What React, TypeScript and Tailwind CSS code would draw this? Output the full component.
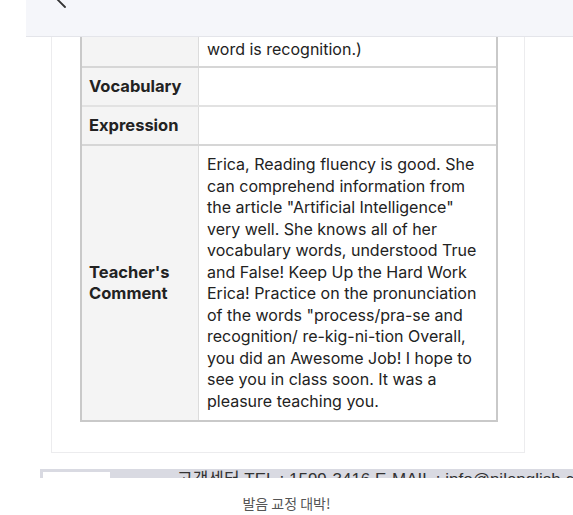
import React from "react";

const font = { fontFamily: 'Inter, "Liberation Sans", Arial, sans-serif' };

const lines = [
  "Erica, Reading fluency is good. She",
  "can comprehend information from",
  'the article "Artificial Intelligence"',
  "very well. She knows all of her",
  "vocabulary words, understood True",
  "and False! Keep Up the Hard Work",
  "Erica! Practice on the pronunciation",
  'of the words "process/pra-se and',
  "recognition/ re-kig-ni-tion Overall,",
  "you did an Awesome Job! I hope to",
  "see you in class soon. It was a",
  "pleasure teaching you.",
];

export default function App() {
  return (
    <div className="w-[573px] h-[515px] bg-white overflow-hidden flex flex-col" style={font}>
      <div className="ml-[26px] h-[37px] shrink-0 bg-[#f5f6fa] border-b border-[#e4e5ea] relative overflow-hidden">
        <svg className="absolute left-[27px] top-[-15px]" width="14" height="24" viewBox="0 0 14 24">
          <path d="M12 2 L2 12 L12 22" stroke="#333" strokeWidth="1.8" fill="none" strokeLinecap="round" />
        </svg>
      </div>
      <div className="ml-[51px] w-[474px] h-[416px] shrink-0 border-l border-r border-b border-[#ececee] pl-[28px]">
        <div className="w-[418px] border-l-2 border-r-2 border-b-2 border-[#c9c9c9] text-[#222] text-[16px]">
          <div className="flex h-[31px] border-b-2 border-[#d6d6d6]">
            <div className="w-[117px] bg-[#f4f4f4] border-r border-[#dcdcdc]" />
            <div className="flex-1 pl-[8px] pt-[2px] leading-[20px]">word is recognition.)</div>
          </div>
          <div className="flex h-[39px] border-b-2 border-[#e2e2e2]">
            <div className="w-[117px] bg-[#f4f4f4] border-r border-[#dcdcdc] flex items-center pl-[7px] font-bold text-[16.5px]">Vocabulary</div>
            <div className="flex-1" />
          </div>
          <div className="flex h-[39px] border-b-2 border-[#d6d6d6]">
            <div className="w-[117px] bg-[#f4f4f4] border-r border-[#dcdcdc] flex items-center pl-[7px] font-bold text-[16.5px]">Expression</div>
            <div className="flex-1" />
          </div>
          <div className="flex h-[274px]">
            <div className="w-[117px] bg-[#f4f4f4] border-r border-[#dcdcdc] flex items-center pl-[7px] font-bold text-[16.5px] leading-[21px]">
              Teacher's
              <br />
              Comment
            </div>
            <div className="flex-1 pl-[8px] flex flex-col justify-center leading-[21.5px] whitespace-nowrap">
              {lines.map((l, i) => (
                <div key={i}>{l}</div>
              ))}
            </div>
          </div>
        </div>
      </div>
      <div className="h-[16px] shrink-0" />
      <div className="ml-[40px] h-[9px] shrink-0 bg-[#d9dae2] overflow-hidden flex relative">
        <div className="ml-[3px] mt-[3px] w-[67px] h-[6px] bg-white" />
        <div
          className="absolute left-[137px] top-[2px] whitespace-nowrap text-[17px] leading-none text-[#333]"
          style={{ fontFamily: '"Liberation Sans", "Noto Sans CJK KR", sans-serif' }}
        >
          고객센터 TEL : 1599-3416 E-MAIL : info@nilenglish.com
        </div>
      </div>
      <div
        className="text-center text-[14px] text-[#555] mt-[15px]"
        style={{ fontFamily: '"Noto Sans CJK KR", sans-serif' }}
      >
        발음 교정 대박!
      </div>
    </div>
  );
}
